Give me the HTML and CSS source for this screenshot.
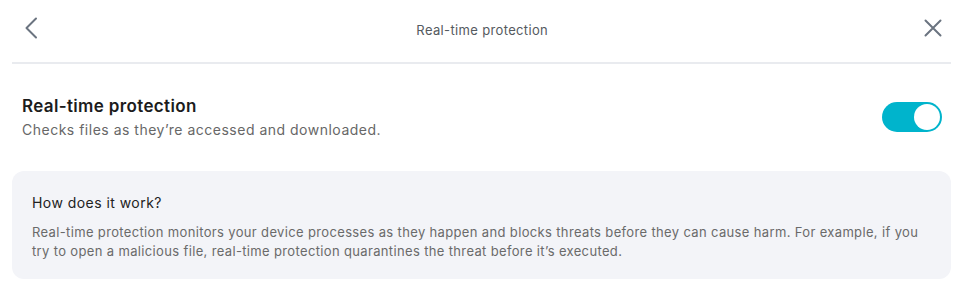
FILE: index.html
```html
<!DOCTYPE html>
<html lang="en">
<head>
<meta charset="utf-8">
<title>Real-time protection</title>
<link rel="stylesheet" href="styles.css">
</head>
<body>
<div class="page">
  <header class="header">
    <button class="icon-btn back" aria-label="Back">
      <svg width="24" height="24" viewBox="0 0 24 24" fill="none" stroke="currentColor" stroke-width="2" stroke-linecap="round" stroke-linejoin="round"><path d="M16 2.5 L6.5 12 L16 21.5"/></svg>
    </button>
    <div class="header-title">Real-time protection</div>
    <button class="icon-btn close" aria-label="Close">
      <svg width="24" height="24" viewBox="0 0 24 24" fill="none" stroke="currentColor" stroke-width="2" stroke-linecap="round"><path d="M4.5 4.5 L19.5 19.5 M19.5 4.5 L4.5 19.5"/></svg>
    </button>
  </header>
  <section class="setting">
    <div class="setting-text">
      <div class="setting-title">Real-time protection</div>
      <div class="setting-desc">Checks files as they’re accessed and downloaded.</div>
    </div>
    <div class="toggle on" role="switch" aria-checked="true"><span class="knob"></span></div>
  </section>
  <div class="info-card">
    <div class="info-title">How does it work?</div>
    <p class="info-body">Real-time protection monitors your device processes as they happen and blocks threats before they can cause harm. For example, if you try to open a malicious file, real-time protection quarantines the threat before it’s executed.</p>
  </div>
</div>
</body>
</html>
```
FILE: styles.css
```css
* { box-sizing: border-box; }
html, body { margin: 0; padding: 0; background: #ffffff; }
body {
  font-family: Inter, "Noto Sans", "Liberation Sans", sans-serif;
  color: #1f1f1f;
}
.page {
  margin: 0 10px 0 12px;
}
.header {
  height: 64px;
  display: flex;
  align-items: center;
  justify-content: space-between;
  padding: 0 6.5px 2px 8px;
  border-bottom: 2px solid #e9ebef;
}
.icon-btn {
  background: none;
  border: 0;
  padding: 0;
  width: 24px;
  height: 24px;
  color: #6b7480;
  display: flex;
  margin-top: -4px;
}
.header-title {
  font-size: 13px;
  line-height: 20px;
  letter-spacing: 0.35px;
  color: #555a60;
}
.setting {
  display: flex;
  align-items: center;
  justify-content: space-between;
  padding: 29.5px 9px 31px 10px;
}
.setting-title {
  font-size: 17px;
  line-height: 24px;
  font-weight: 600;
  letter-spacing: 0.35px;
  color: #1c1c1c;
  margin-bottom: 2px;
}
.setting-desc {
  font-size: 14px;
  line-height: 20px;
  letter-spacing: 0.5px;
  color: #676767;
}
.toggle {
  width: 60px;
  height: 30px;
  border-radius: 15px;
  background: #00b4cc;
  padding: 2px;
  display: flex;
  justify-content: flex-end;
}
.knob {
  width: 26px;
  height: 26px;
  border-radius: 50%;
  background: #ffffff;
}
.info-card {
  background: #f3f4f8;
  border-radius: 12px;
  padding: 22px 20px 18px;
}
.info-title {
  font-size: 14px;
  line-height: 20px;
  letter-spacing: 0.45px;
  color: #222222;
  margin-bottom: 10px;
}
.info-body {
  margin: 0;
  font-size: 13px;
  line-height: 19px;
  letter-spacing: 0.35px;
  color: #6a6a6a;
}
```
